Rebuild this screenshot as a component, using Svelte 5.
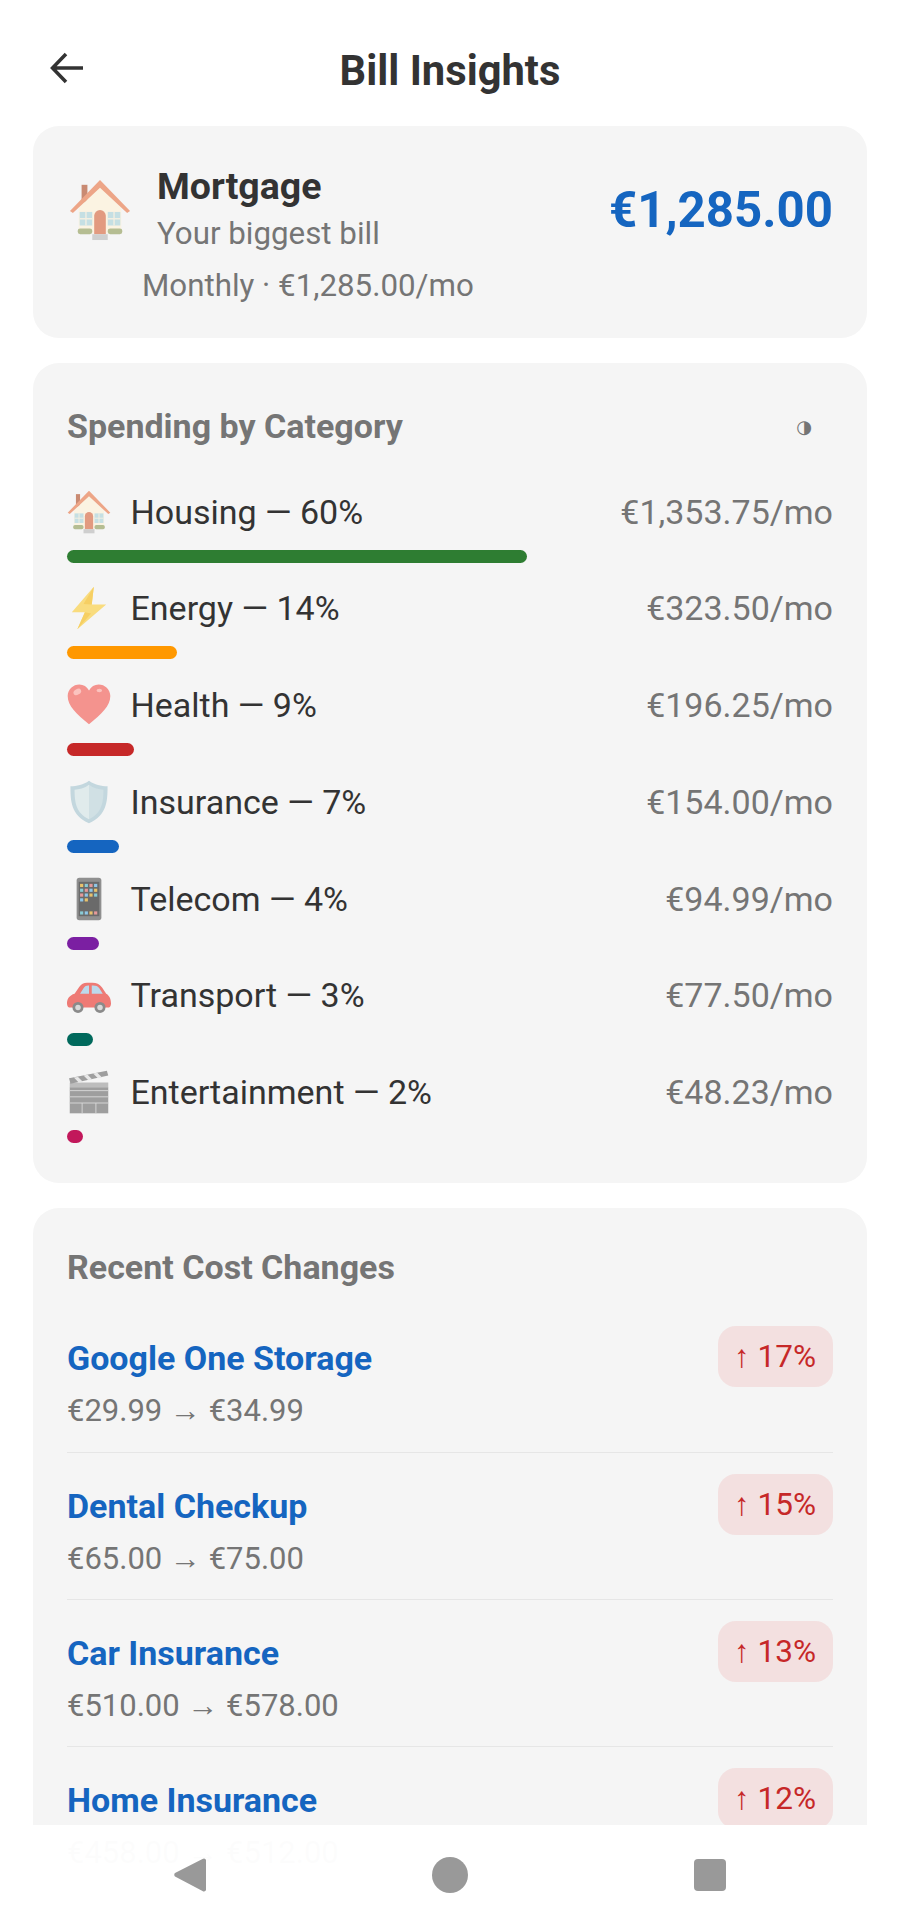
<script>
  const categories = [
    { icon: 'house', name: 'Housing', pct: 60, amount: '€1,353.75/mo', width: 60.1, color: '#2e7d32' },
    { icon: 'bolt', name: 'Energy', pct: 14, amount: '€323.50/mo', width: 14.35, color: '#ff9800' },
    { icon: 'heart', name: 'Health', pct: 9, amount: '€196.25/mo', width: 8.7, color: '#c62828' },
    { icon: 'shield', name: 'Insurance', pct: 7, amount: '€154.00/mo', width: 6.85, color: '#1565c0' },
    { icon: 'phone', name: 'Telecom', pct: 4, amount: '€94.99/mo', width: 4.2, color: '#7b1fa2' },
    { icon: 'car', name: 'Transport', pct: 3, amount: '€77.50/mo', width: 3.4, color: '#00695c' },
    { icon: 'clapper', name: 'Entertainment', pct: 2, amount: '€48.23/mo', width: 2.1, color: '#c2185b' }
  ];

  const changes = [
    { name: 'Google One Storage', from: '€29.99', to: '€34.99', pct: 17 },
    { name: 'Dental Checkup', from: '€65.00', to: '€75.00', pct: 15 },
    { name: 'Car Insurance', from: '€510.00', to: '€578.00', pct: 13 },
    { name: 'Home Insurance', from: '€458.00', to: '€512.00', pct: 12 }
  ];
</script>

{#snippet emoji(kind, cls)}
  <svg class={cls} viewBox="0 0 64 64" aria-hidden="true">
    {#if kind === 'house'}
      <rect x="13" y="6" width="6" height="18" fill="#c98a72" />
      <path d="M10 30 32 8l22 22v26H10z" fill="#fbf3e2" />
      <path d="M1 33 32 1l31 32-3 2L32 9 4 35z" fill="#eda587" />
      <rect x="11" y="34" width="13" height="14" fill="#c5dfe3" />
      <rect x="40" y="34" width="13" height="14" fill="#c5dfe3" />
      <path d="M17.500 34v14M11 41h13M46.500 34v14M40 41h13" stroke="#f3efe2" stroke-width="1.400" />
      <rect x="9" y="51" width="15" height="6" rx="2.500" fill="#b5bd92" />
      <rect x="40" y="51" width="15" height="6" rx="2.500" fill="#b5bd92" />
      <path d="M26 57V38a6 6 0 0 1 12 0v19z" fill="#e29a80" />
      <rect x="24" y="57" width="16" height="6" fill="#cfcfcf" />
    {:else if kind === 'bolt'}
      <path d="M39 1 7 38h19L15 63l42-36H36z" fill="#f9dc7e" />
      <path d="M39 1 24 26l12 1zM26 38l-11 25 20-23z" fill="#f6cf63" />
    {:else if kind === 'heart'}
      <path d="M32 60C14 45 1 34 1 19 1 9 9 2 18 2c6 0 11 3 14 9 3-6 8-9 14-9 9 0 17 7 17 17 0 15-13 26-31 41z" fill="#f4938e" />
      <ellipse cx="15" cy="13" rx="6" ry="4" transform="rotate(-30 15 13)" fill="#fbc3bf" />
      <ellipse cx="47" cy="11" rx="4" ry="2.500" fill="#fbc3bf" />
    {:else if kind === 'shield'}
      <path d="M32 1C24 7 14 9 5 9c0 22 1 42 27 54C58 51 59 31 59 9c-9 0-19-2-27-8z" fill="#c3d7de" />
      <path d="M32 7c-6 5-15 7-21 7 0 18 2 34 21 43z" fill="#e0ebec" />
      <path d="M32 7c6 5 15 7 21 7 0 18-2 34-21 43z" fill="#d0e0e4" />
    {:else if kind === 'phone'}
      <rect x="14" y="1" width="36" height="62" rx="4" fill="#8f8f8f" />
      <rect x="17" y="7" width="30" height="50" fill="#6a6a6a" />
      {#each [0, 1, 2, 3] as r}
        {#each [0, 1, 2, 3] as c}
          {#if r < 3 || c < 2}
            <rect x={19 + c * 6.8} y={10 + r * 7} width="4.600" height="4.600" fill={['#e8c26c', '#89cbd6', '#e59a9a', '#8fc7e8'][(r + c) % 4]} />
          {/if}
        {/each}
      {/each}
      {#each [0, 1, 2, 3] as c}
        <rect x={19 + c * 6.8} y="50" width="4.600" height="4.600" fill={['#89cbd6', '#8fc7e8', '#e8c26c', '#e59a9a'][c]} />
      {/each}
    {:else if kind === 'car'}
      <path d="M0 44c0-7 4-12 11-14l7-10c3-4 6-6 11-6h8c6 0 10 2 14 7l6 9c4 2 7 7 7 14 0 3-1 6-3 6H3c-2 0-3-3-3-6z" fill="#ee7a75" />
      <path d="M19 30l5-8c2-3 4-4 7-4h1v12zM36 18h2c4 0 7 1 9 4l5 8H36z" fill="#bcd9ec" />
      <circle cx="16" cy="50" r="8" fill="#8a8a8a" /><circle cx="16" cy="50" r="4" fill="#d9d9d9" />
      <circle cx="48" cy="50" r="8" fill="#8a8a8a" /><circle cx="48" cy="50" r="4" fill="#d9d9d9" />
    {:else if kind === 'clapper'}
      <rect x="4" y="25" width="56" height="38" fill="#9e9e9e" />
      <path d="M4 30h56M4 39h56M4 48h56M22 48v15M42 48v15" stroke="#d6d6d6" stroke-width="1.400" />
      <path d="M4 25h56v-7H4z" fill="#bdbdbd" />
      <path d="M3 12 58 1l2 7L5 20z" fill="#9e9e9e" />
      <path d="M10 11l7 7 6-1-7-7zM24 8l7 7 6-1-7-7zM38 5l7 7 6-1-7-7z" fill="#e8e8e8" />
    {/if}
  </svg>
{/snippet}

<div class="screen">
  <header class="top">
    <svg class="back" viewBox="0 0 34 32" aria-hidden="true">
      <path d="M33 16H3M16 2 2.500 16 16 30" fill="none" stroke="#333" stroke-width="3.500" />
    </svg>
    <h1>Bill Insights</h1>
  </header>

  <section class="card top-bill">
    <div class="bill-row">
      {@render emoji('house', 'bill-emoji')}
      <div class="bill-names">
        <div class="bill-name">Mortgage</div>
        <div class="bill-sub">Your biggest bill</div>
      </div>
      <div class="bill-amount">€1,285.00</div>
    </div>
    <div class="bill-meta">Monthly · €1,285.00/mo</div>
  </section>

  <section class="card cats">
    <div class="cats-head">
      <h2>Spending by Category</h2>
      <span class="toggle">◑</span>
    </div>
    {#each categories as c}
      <div class="cat">
        <div class="cat-row">
          {@render emoji(c.icon, 'cat-emoji')}
          <span class="cat-name">{c.name} — {c.pct}%</span>
          <span class="cat-amount">{c.amount}</span>
        </div>
        <div class="bar" style="width: {c.width}%; background: {c.color}"></div>
      </div>
    {/each}
  </section>

  <section class="card recent">
    <h2>Recent Cost Changes</h2>
    {#each changes as ch, i}
      <div class="change" class:first={i === 0}>
        <div class="change-text">
          <div class="change-name">{ch.name}</div>
          <div class="change-price">{ch.from} → {ch.to}</div>
        </div>
        <div class="badge">↑ {ch.pct}%</div>
      </div>
    {/each}
  </section>

  <nav class="sysnav">
    <svg class="nav-btn" viewBox="0 0 32 36" aria-hidden="true">
      <path d="M30 1.500c1 0 2 .8 2 2v29c0 1.200-1 2-2 2-.6 0-1-.2-1.500-.6L1 19.500c-1-1-1-2.500 0-3.500L28.500 2c.5-.3 1-.5 1.500-.5z" fill="#999" />
    </svg>
    <svg class="nav-btn" viewBox="0 0 36 36" aria-hidden="true"><circle cx="18" cy="18" r="18" fill="#999" /></svg>
    <svg class="nav-btn" viewBox="0 0 32 32" aria-hidden="true"><rect width="32" height="32" rx="4" fill="#999" /></svg>
  </nav>
</div>

<style>
  :global(body) {
    margin: 0;
    background: #fff;
  }
  .screen {
    position: relative;
    width: 900px;
    height: 1925px;
    overflow: hidden;
    background: #fff;
    font-family: Roboto, "Liberation Sans", sans-serif;
    color: #333;
    box-sizing: border-box;
    padding: 0 33px;
  }
  .top {
    height: 126px;
    display: flex;
    align-items: center;
    justify-content: center;
    position: relative;
  }
  .top h1 {
    margin: 14px 0 0;
    font-size: 41.700px;
    font-weight: 700;
    color: #333;
  }
  .back {
    position: absolute;
    left: 17px;
    top: 52px;
    width: 34px;
    height: 32px;
  }
  .card {
    background: #f5f5f5;
    border-radius: 26px;
    box-sizing: border-box;
    padding: 0 34px;
  }
  .top-bill {
    height: 212px;
    margin-bottom: 25px;
    padding-top: 36px;
  }
  .bill-row {
    display: flex;
    align-items: center;
  }
  :global(.bill-emoji) {
    width: 62px;
    height: 62px;
    margin: 0 26px 0 2px;
    flex: none;
  }
  .bill-names {
    flex: 1;
  }
  .bill-name {
    font-size: 37.500px;
    font-weight: 700;
    line-height: 48px;
  }
  .bill-sub {
    font-size: 31.300px;
    line-height: 47px;
    color: #757575;
  }
  .bill-amount {
    font-size: 49.200px;
    font-weight: 700;
    color: #1565c0;
  }
  .bill-meta {
    font-size: 31.300px;
    line-height: 44px;
    color: #757575;
    margin: 7px 0 0 75px;
  }
  .cats {
    height: 820px;
    margin-bottom: 25px;
    padding-top: 41px;
  }
  .cats-head {
    display: flex;
    justify-content: space-between;
    align-items: center;
    height: 44px;
    margin-bottom: 34.500px;
  }
  h2 {
    margin: 0;
    font-size: 34px;
    font-weight: 700;
    color: #757575;
  }
  .toggle {
    font-family: "DejaVu Sans", sans-serif;
    font-size: 18px;
    color: #757575;
    margin-right: 21px;
  }
  .cat {
    height: 96.750px;
  }
  .cat-row {
    display: flex;
    align-items: center;
    height: 58px;
    margin-bottom: 9px;
  }
  :global(.cat-emoji) {
    width: 44px;
    height: 44px;
    flex: none;
    margin-right: 19.500px;
  }
  .cat-name {
    flex: 1;
    font-size: 34px;
  }
  .cat-amount {
    font-size: 34px;
    color: #757575;
  }
  .bar {
    height: 13px;
    border-radius: 7px;
  }
  .recent {
    padding-top: 37px;
    height: 900px;
  }
  .recent h2 {
    line-height: 44px;
    margin-bottom: 38px;
  }
  .change {
    display: flex;
    justify-content: space-between;
    align-items: flex-start;
    height: 147px;
    box-sizing: border-box;
    padding-top: 22px;
    border-top: 1px solid #e6e6e6;
  }
  .change.first {
    border-top: 0;
    height: 125px;
    padding-top: 0;
  }
  .change-name {
    font-size: 34px;
    font-weight: 700;
    color: #1565c0;
    line-height: 62px;
  }
  .change-price {
    font-size: 31px;
    color: #757575;
    line-height: 44px;
  }
  .badge {
    height: 61px;
    line-height: 61px;
    padding: 0 17px 0 16px;
    border-radius: 18px;
    background: #f3e0e0;
    color: #c62828;
    font-size: 31.500px;
    margin-top: -1px;
  }
  .sysnav {
    position: absolute;
    left: 0;
    right: 0;
    bottom: 0;
    height: 100px;
    background: rgba(255, 255, 255, 0.98);
  }
  :global(.nav-btn) {
    position: absolute;
  }
  .sysnav :global(.nav-btn:nth-child(1)) { left: 174px; top: 32px; width: 32px; height: 36px; }
  .sysnav :global(.nav-btn:nth-child(2)) { left: 432px; top: 32px; width: 36px; height: 36px; }
  .sysnav :global(.nav-btn:nth-child(3)) { left: 694px; top: 34px; width: 32px; height: 32px; }
</style>
